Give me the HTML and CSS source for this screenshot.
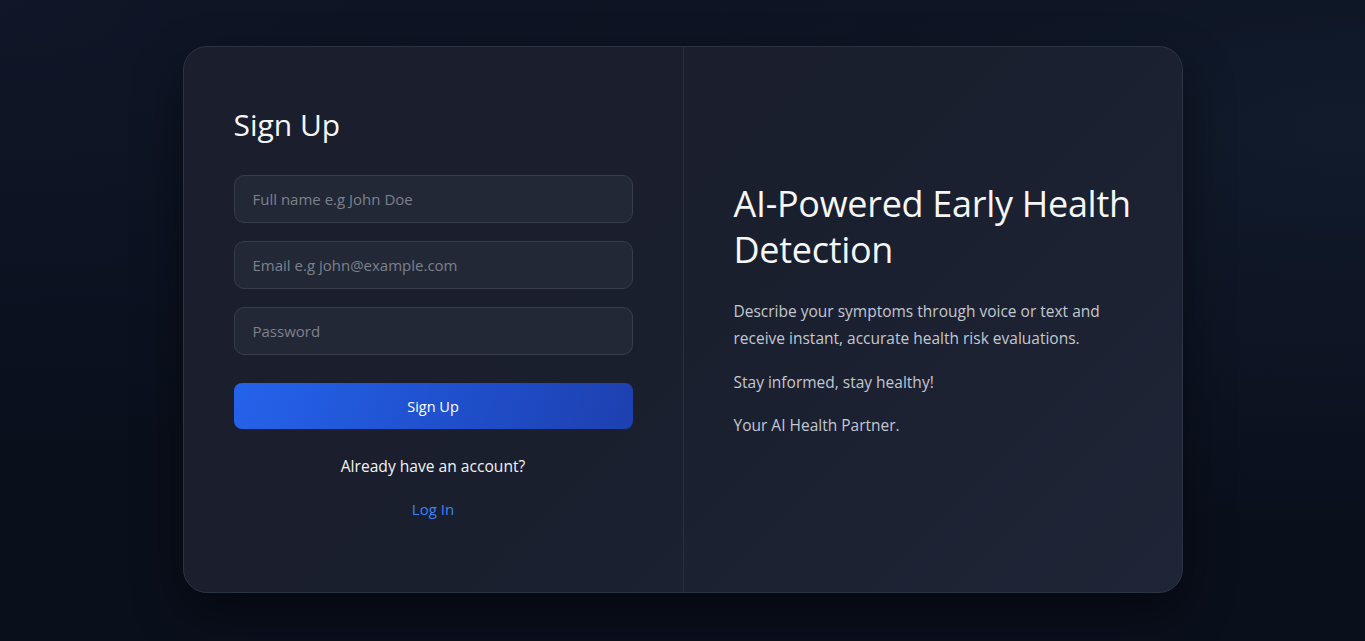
FILE: index.html
```html
<!DOCTYPE html>
<html lang="en">
<head>
<meta charset="utf-8">
<title>Sign Up</title>
<link rel="stylesheet" href="styles.css">
</head>
<body>
<main class="card">
  <section class="form-side">
    <h1 class="title">Sign Up</h1>
    <form class="form">
      <input class="field" type="text" placeholder="Full name e.g John Doe">
      <input class="field" type="email" placeholder="Email e.g john@example.com">
      <input class="field" type="password" placeholder="Password">
      <button class="btn" type="button">Sign Up</button>
    </form>
    <p class="already">Already have an account?</p>
    <a class="login" href="#">Log In</a>
  </section>
  <section class="info-side">
    <h2 class="info-title">AI-Powered Early Health Detection</h2>
    <p class="info-text">Describe your symptoms through voice or text and receive instant, accurate health risk evaluations.</p>
    <p class="info-text">Stay informed, stay healthy!</p>
    <p class="info-text">Your AI Health Partner.</p>
  </section>
</main>
</body>
</html>
```
FILE: styles.css
```css
* { box-sizing: border-box; }
html, body { height: 100%; }
body {
  margin: 0;
  padding-top: 46px;
  font-family: "Open Sans", "Noto Sans", sans-serif;
  background:
    radial-gradient(ellipse at 100% 20%, #111b2c 0%, rgba(17,27,44,0) 55%),
    radial-gradient(ellipse at 0% 0%, #0f1728 0%, rgba(15,23,40,0) 50%),
    #0a0f1c;
  display: flex;
  align-items: flex-start;
  justify-content: center;
  color: #f1f3f7;
}
.card {
  width: 1000px;
  height: 547px;
  display: flex;
  border: 1px solid #2c3343;
  border-radius: 24px;
  background: linear-gradient(135deg, #1a1e2d 0%, #1a1f2e 50%, #1e2536 100%);
  box-shadow: 0 20px 50px rgba(0,0,0,0.45);
  overflow: hidden;
}
.form-side {
  width: 500px;
  padding: 60px 50px 0;
  border-right: 1px solid #2a3040;
  display: flex;
  flex-direction: column;
  align-items: center;
}
.title {
  align-self: stretch;
  margin: 0 0 32px;
  font-size: 30px;
  line-height: 36px;
  font-weight: 500;
  color: #f5f6f8;
}
.form {
  width: 100%;
  display: flex;
  flex-direction: column;
  gap: 18px;
}
.field {
  height: 48px;
  width: 100%;
  border: 1px solid #383d4c;
  border-radius: 10px;
  background: #232836;
  padding: 0 18px;
  font-family: inherit;
  font-size: 15px;
  color: #e5e7eb;
  outline: none;
}
.field::placeholder { color: #7c818d; }
.btn {
  margin-top: 10px;
  height: 46px;
  border: none;
  border-radius: 8px;
  background: linear-gradient(110deg, #2563eb 0%, #1f4fcc 55%, #1e40af 100%);
  color: #ffffff;
  font-family: inherit;
  font-size: 14.5px;
  font-weight: 500;
}
.already {
  margin: 25px 0 0;
  font-size: 15.6px;
  line-height: 24px;
  color: #f1f3f7;
}
.login {
  margin-top: 20px;
  font-size: 15px;
  line-height: 22px;
  font-weight: 500;
  color: #3b82f6;
  text-decoration: none;
}
.info-side {
  flex: 1;
  padding: 134px 38px 0 50px;
}
.info-title {
  margin: 0 0 25px;
  font-size: 36px;
  line-height: 46px;
  font-weight: 500;
  color: #f5f6f8;
  letter-spacing: -0.3px;
}
.info-text {
  margin: 0 0 16.5px;
  font-size: 15.5px;
  line-height: 27px;
  color: #c3c8d1;
}
```
